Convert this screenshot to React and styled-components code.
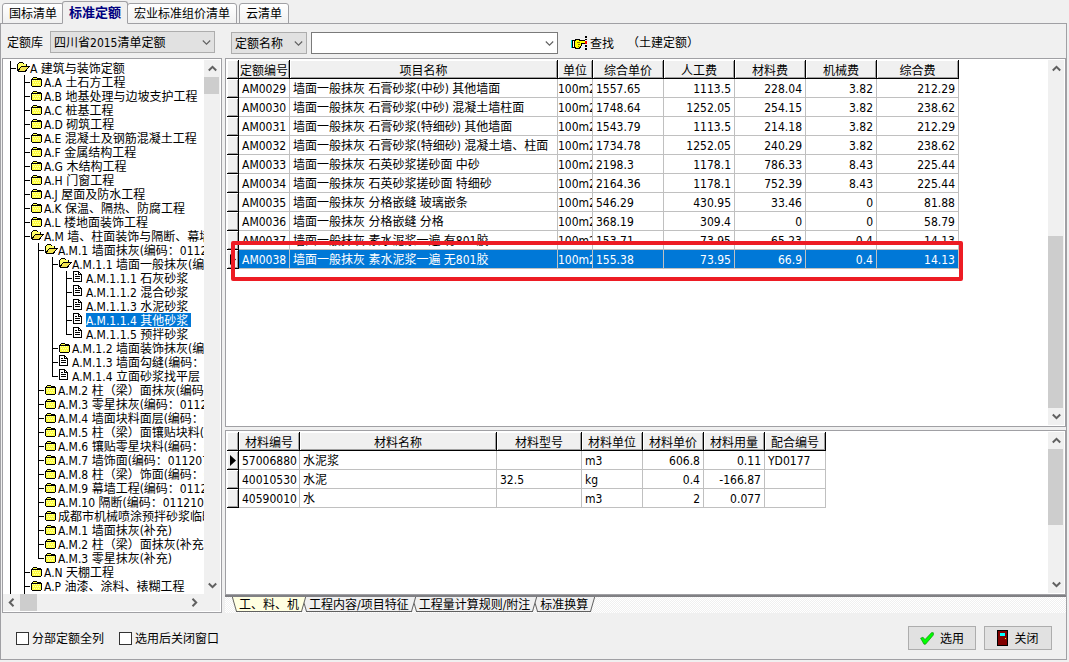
import React, { useState } from "react";
import styled, { createGlobalStyle, css } from "styled-components";

const FONT = '"DejaVu Sans Condensed", "Noto Sans CJK SC", "Noto Sans", sans-serif';

const GlobalStyle = createGlobalStyle`
  *, *::before, *::after { box-sizing: border-box; }
  body {
    margin: 0;
    background: #f0f0f0;
    color: #000;
    font: 12px/14px ${FONT};
  }
  button, input, select { font: inherit; color: inherit; margin: 0; border-radius: 0; }
`;

const Window = styled.div`
  display: flex;
  flex-direction: column;
  height: 100vh;
  min-height: 480px;
  padding: 0 2px 2px 0;
`;

const TabBar = styled.nav`
  display: flex;
  align-items: flex-end;
  height: 24px;
  padding-left: 2px;
  margin-bottom: -1px;
  flex: none;
`;

const Tab = styled.button`
  position: relative;
  height: 21px;
  padding: 1px 6px 0;
  margin-right: 2px;
  border: 1px solid #a0a0a4;
  border-radius: 3px 3px 0 0;
  background: linear-gradient(#fff, #f0f0f0);
  white-space: nowrap;
  ${(p) =>
    p.$active &&
    css`
      z-index: 1;
      height: 23px;
      margin: 0 -1px 0 -4px;
      border-bottom-color: #f0f0f0;
      background: #f0f0f0;
      color: #000080;
      font-size: 13px;
      font-weight: bold;
    `}
`;

const Frame = styled.main`
  flex: 1;
  min-height: 0;
  display: flex;
  flex-direction: column;
  border: 1px solid #a0a0a4;
`;

const Columns = styled.div`
  flex: 1;
  min-height: 0;
  display: flex;
  gap: 3px;
  padding-left: 1px;
`;

const Column = styled.section`
  display: flex;
  flex-direction: column;
  min-width: 0;
  flex: ${(p) => (p.$side ? "0 0 220px" : "1")};
`;

const Toolbar = styled.div`
  flex: none;
  display: flex;
  align-items: center;
  height: 34px;
  padding: ${(p) => (p.$side ? "2px 7px 0 5px" : "4px 6px 0")};
  gap: ${(p) => (p.$side ? "7px" : "4px")};
`;

const FieldLabel = styled.label`
  padding-top: 2px;
`;

const SelectWrap = styled.span`
  position: relative;
  display: flex;
  flex: ${(p) => (p.$fill ? "1" : `0 0 ${p.$width}px`)};
  height: 22px;
`;

const Select = styled.select`
  appearance: none;
  width: 100%;
  padding: 2px 18px 0 3px;
  border: 1px solid #adadad;
  background: #e1e1e1;
`;

const ComboInput = styled.input`
  width: 100%;
  padding: 0 20px 0 3px;
  border: 1px solid #7a7a7a;
  background: #fff;
`;

const ChevronSlot = styled.span`
  position: absolute;
  right: 4px;
  top: 0;
  height: 100%;
  display: flex;
  align-items: center;
  pointer-events: none;
`;

const FlatButton = styled.button`
  display: flex;
  align-items: center;
  gap: 2px;
  padding: 0;
  margin-left: 9px;
  border: 0;
  background: none;
`;

const Category = styled.span`
  margin-left: 9px;
`;

const Panel = styled.div`
  display: flex;
  min-height: 0;
  border: 1px solid #a0a0a4;
  background: #fff;
  flex: ${(p) => (p.$height ? `0 0 ${p.$height}px` : "1")};
  flex-direction: ${(p) => (p.$column ? "column" : "row")};
  padding: ${(p) => (p.$column ? "1px 1px 1px 0" : "1px")};
  margin-bottom: ${(p) => (p.$gap ? "3px" : "0")};
`;

const TreeBody = styled.div`
  flex: 1;
  min-height: 0;
  display: flex;
`;

const TreeList = styled.ul`
  flex: 1;
  min-width: 0;
  min-height: 0;
  margin: 0;
  padding: 1px 0 0;
  overflow: hidden;
  list-style: none;
`;

const TreeRow = styled.li`
  display: flex;
  height: 14px;
  white-space: nowrap;
`;

const Guide = styled.span`
  flex: none;
  width: 14px;
  height: 14px;
  background:
    linear-gradient(#000, #000) 7px 0 / 1px ${(p) => (p.$last ? "8px" : "14px")} no-repeat,
    linear-gradient(#000, #000) 7px 7px / ${(p) => (p.$branch ? "6px" : "0")} 1px no-repeat;
`;

const TreeIcon = styled.svg`
  flex: none;
  width: 13px;
  height: 14px;
  shape-rendering: crispEdges;
`;

const TreeLabel = styled.span`
  flex: none;
  line-height: 16px;
  ${(p) =>
    p.$selected &&
    css`
      padding-right: 3px;
      background: #0078d7;
      color: #fff;
    `}
`;

const ScrollTrack = styled.div`
  flex: none;
  display: flex;
  background: #f0f0f0;
  flex-direction: ${(p) => (p.$horizontal ? "row" : "column")};
  ${(p) => (p.$horizontal ? "height: 17px; padding-right: 17px;" : "width: 16px;")}
`;

const ScrollEnd = styled.span`
  flex: 0 0 17px;
  display: flex;
  align-items: center;
  justify-content: center;
`;

const ScrollRun = styled.span`
  flex: 1;
  min-height: 0;
  display: flex;
  flex-direction: ${(p) => (p.$horizontal ? "row" : "column")};
  justify-content: ${(p) => (p.$end ? "flex-end" : "flex-start")};
`;

const ScrollThumb = styled.span`
  flex: 0 0 ${(p) => p.$size};
  background: #cdcdcd;
  ${(p) => !p.$horizontal && "width: 15px;"}
`;

const GridArea = styled.div`
  flex: 1;
  min-width: 0;
  overflow: hidden;
`;

const TableBox = styled.div`
  position: relative;
  width: max-content;
`;

const Table = styled.table`
  table-layout: fixed;
  width: ${(p) => p.$width}px;
  border-spacing: 0;
  border-collapse: separate;
`;

const raised = css`
  border-right: 1px solid #000;
  border-bottom: 1px solid #000;
  background: #f0f0f0;
  box-shadow: inset 1px 1px #fff, inset -1px -1px #a0a0a0;
`;

const HeadCell = styled.th`
  ${raised}
  height: 19px;
  padding: 3px 0 0;
  font-weight: normal;
  white-space: nowrap;
  overflow: hidden;
`;

const MarkerCell = styled.td`
  ${raised}
  height: 19px;
  padding: 0 0 0 3px;
`;

const Cell = styled.td`
  height: 19px;
  padding: 2px ${(p) => (p.$tight ? "0" : "3px")} 0;
  border-right: 1px solid #c0c0c0;
  border-bottom: 1px solid #c0c0c0;
  overflow: hidden;
  white-space: nowrap;
  text-align: ${(p) => (p.$right ? "right" : "left")};
  ${(p) => p.$selected && "background: #0078d7; color: #fff;"}
`;

const Highlight = styled.div`
  position: absolute;
  left: 4px;
  right: -4px;
  bottom: -12px;
  height: 40px;
  border: 4px solid #ed1c24;
  border-radius: 2px;
  pointer-events: none;
`;

const SheetTabs = styled.div`
  flex: 0 0 18px;
  display: flex;
  padding-left: 9px;
  border-top: 2px solid #808084;
  background: repeating-conic-gradient(#f0f0f0 0 25%, #fff 0 50%) 0 0 / 2px 2px;
`;

const SheetTab = styled.button`
  position: relative;
  isolation: isolate;
  z-index: ${(p) => p.$order};
  height: 15px;
  padding: 0 5px;
  border: 0;
  background: none;
  line-height: 14px;
  white-space: nowrap;
  &::before, &::after {
    content: "";
    position: absolute;
    z-index: -1;
    top: 0;
    bottom: 0;
    width: calc(50% + 3px);
    border-bottom: 1px solid #606060;
    background: ${(p) => (p.$active ? "#ffffe1" : "#f0f0f0")};
  }
  &::before {
    left: 0;
    border-left: 1px solid #606060;
    transform: skewX(16deg);
  }
  &::after {
    right: 0;
    border-right: 1px solid #606060;
    transform: skewX(-16deg);
  }
`;

const Footer = styled.footer`
  flex: 0 0 46px;
  display: flex;
  align-items: center;
  gap: 15px;
  padding: 4px 14px 0 15px;
`;

const CheckLabel = styled.label`
  display: flex;
  align-items: center;
  gap: 3px;
`;

const Caption = styled.span`
  padding-top: 2px;
`;

const CheckBox = styled.input`
  appearance: none;
  width: 13px;
  height: 13px;
  border: 1px solid #333;
  background: #fff;
  &:checked { background: #0078d7; box-shadow: inset 0 0 0 2px #fff; }
`;

const Actions = styled.div`
  display: flex;
  gap: 8px;
  margin-left: auto;
`;

const ActionButton = styled.button`
  display: flex;
  align-items: center;
  justify-content: center;
  gap: 6px;
  width: 68px;
  height: 24px;
  padding: 0;
  border: 1px solid #adadad;
  background: #e1e1e1;
`;

const TURN = { down: 0, up: 180, left: 90, right: 270 };

function Chevron({ dir = "down", bold }) {
  return (
    <svg width="9" height="9" viewBox="0 0 9 9" aria-hidden="true">
      <path
        d="M0.8 2.5 L4.5 6.2 L8.2 2.5"
        fill="none"
        stroke="#606060"
        strokeWidth={bold ? 2 : 1.1}
        transform={`rotate(${TURN[dir]} 4.5 4.5)`}
      />
    </svg>
  );
}

function NodeIcon({ kind }) {
  if (kind === "doc")
    return (
      <TreeIcon viewBox="0 0 13 14" aria-hidden="true">
        <path d="M0 0h6v1h1v1h1v1h1v8H0z" fill="#000" />
        <path d="M1 1h4v3h3v6H1z" fill="#fff" />
        <path d="M6 2h1v1H6z" fill="#fff" />
        <path d="M2 3h2v1H2zM2 5h5v1H2zM2 7h5v1H2z" fill="#000" />
      </TreeIcon>
    );
  if (kind === "open")
    return (
      <TreeIcon viewBox="0 0 13 14" aria-hidden="true">
        <path d="M2 1h4v1h1v1h3v2h3v1h-1v1h-1v1h-1v2h-1v1H1v-1H0V3h1V2h1z" fill="#000" />
        <path d="M2 2h4v1h3v2H4v1H3v1H2v1H1V3h1z" fill="#ffff66" />
        <path d="M4 6h7v1h-1v1H9v1H8v1H2V9h1V7h1z" fill="#f2e24c" />
      </TreeIcon>
    );
  return (
    <TreeIcon viewBox="0 0 13 14" aria-hidden="true">
      <path d="M1 3h1V2h4v1h4v1h1v7h-1v1H1v-1H0V4h1z" fill="#000" />
      <path d="M2 3h4v1H2zM1 5h9v6H1z" fill="#ffff40" />
      <path d="M1 5h1v1H1zM3 5h1v1H3zM5 5h1v1H5zM7 5h1v1H7zM2 7h1v1H2zM4 7h1v1H4zM6 7h1v1H6zM8 7h1v1H8zM3 9h1v1H3zM5 9h1v1H5zM7 9h1v1H7z" fill="#ffffb0" />
    </TreeIcon>
  );
}

function HandIcon() {
  return (
    <svg width="17" height="15" viewBox="0 0 17 15" shapeRendering="crispEdges" aria-hidden="true">
      <path d="M0 4h4V3h5v1h5v1h1v2h-1v1h-3v2h-1v2H9v1H4v-1H0z" fill="#000" />
      <path d="M0 4h1v8H0z" fill="#00e0e0" />
      <path d="M2 5h1v6H2z" fill="#fff" />
      <path d="M4 5h1V4h3v1h6v2h-4v1h0v2H9v1H8v1H5v-1H4z" fill="#ffff00" />
      <path d="M6 6h3v1H6zM7 8h2v1H7zM7 10h1v1H7z" fill="#808000" />
      <path d="M14 0h2v2h-2zM14 3h2v1h-2zM14 9h2v2h-2zM14 12h2v2h-2z" fill="#000" />
      <path d="M14 5h2v3h-2z" fill="#ff0000" />
    </svg>
  );
}

function CheckIcon() {
  return (
    <svg width="14" height="13" viewBox="0 0 14 13" aria-hidden="true">
      <path d="M0.6 6.2 L3 5.2 L5 7.6 L11.6 0.6 L13.4 0.8 L13.4 3 L5.6 12.2 L4 12.2 Z" fill="#00ff00" stroke="#159015" strokeWidth="0.7" />
    </svg>
  );
}

function DoorIcon() {
  return (
    <svg width="11" height="16" viewBox="0 0 11 16" shapeRendering="crispEdges" aria-hidden="true">
      <path d="M0 0h11v16H0z" fill="#000" />
      <path d="M1 1h9v14H1z" fill="#800000" />
      <path d="M3 3h5v3H3z" fill="#00ffff" />
      <path d="M8 8h1v1H8z" fill="#ffff00" />
    </svg>
  );
}

function RowPointer() {
  return (
    <svg width="7" height="11" viewBox="0 0 7 11" display="block" aria-label="当前行">
      <path d="M0 0v11l6-5.5z" fill="#000" />
    </svg>
  );
}

function ScrollBar({ horizontal, size, end }) {
  return (
    <ScrollTrack $horizontal={horizontal} aria-hidden="true">
      <ScrollEnd>
        <Chevron bold dir={horizontal ? "left" : "up"} />
      </ScrollEnd>
      <ScrollRun $horizontal={horizontal} $end={end}>
        <ScrollThumb $horizontal={horizontal} $size={size} />
      </ScrollRun>
      <ScrollEnd>
        <Chevron bold dir={horizontal ? "right" : "down"} />
      </ScrollEnd>
    </ScrollTrack>
  );
}

const TREE = [
  [0, "open", "A 建筑与装饰定额"],
  [1, "folder", "A.A 土石方工程"],
  [1, "folder", "A.B 地基处理与边坡支护工程"],
  [1, "folder", "A.C 桩基工程"],
  [1, "folder", "A.D 砌筑工程"],
  [1, "folder", "A.E 混凝土及钢筋混凝土工程"],
  [1, "folder", "A.F 金属结构工程"],
  [1, "folder", "A.G 木结构工程"],
  [1, "folder", "A.H 门窗工程"],
  [1, "folder", "A.J 屋面及防水工程"],
  [1, "folder", "A.K 保温、隔热、防腐工程"],
  [1, "folder", "A.L 楼地面装饰工程"],
  [1, "open", "A.M 墙、柱面装饰与隔断、幕墙工程"],
  [2, "open", "A.M.1 墙面抹灰(编码：011201)"],
  [3, "open", "A.M.1.1 墙面一般抹灰(编码：011201001)"],
  [4, "doc", "A.M.1.1.1 石灰砂浆"],
  [4, "doc", "A.M.1.1.2 混合砂浆"],
  [4, "doc", "A.M.1.1.3 水泥砂浆"],
  [4, "doc", "A.M.1.1.4 其他砂浆"],
  [4, "doc", "A.M.1.1.5 预拌砂浆", true],
  [3, "folder", "A.M.1.2 墙面装饰抹灰(编码：011201002)"],
  [3, "doc", "A.M.1.3 墙面勾缝(编码：011201003)"],
  [3, "doc", "A.M.1.4 立面砂浆找平层", true],
  [2, "folder", "A.M.2 柱（梁）面抹灰(编码：011202)"],
  [2, "folder", "A.M.3 零星抹灰(编码：011203)"],
  [2, "folder", "A.M.4 墙面块料面层(编码：011204)"],
  [2, "folder", "A.M.5 柱（梁）面镶贴块料(编码：011205)"],
  [2, "folder", "A.M.6 镶贴零星块料(编码：011206)"],
  [2, "folder", "A.M.7 墙饰面(编码：011207)"],
  [2, "folder", "A.M.8 柱（梁）饰面(编码：011208)"],
  [2, "folder", "A.M.9 幕墙工程(编码：011209)"],
  [2, "folder", "A.M.10 隔断(编码：011210)"],
  [2, "folder", "成都市机械喷涂预拌砂浆临时定额"],
  [2, "folder", "A.M.1 墙面抹灰(补充)"],
  [2, "folder", "A.M.2 柱（梁）面抹灰(补充)"],
  [2, "folder", "A.M.3 零星抹灰(补充)", true],
  [1, "folder", "A.N 天棚工程"],
  [1, "folder", "A.P 油漆、涂料、裱糊工程"],
  [1, "folder", "A.Q 其他装饰工程"],
];

const QUOTA_COLUMNS = [
  { name: "定额编号", width: 51 },
  { name: "项目名称", width: 268 },
  { name: "单位", width: 35, tight: true },
  { name: "综合单价", width: 71 },
  { name: "人工费", width: 71, right: true },
  { name: "材料费", width: 71, right: true },
  { name: "机械费", width: 71, right: true },
  { name: "综合费", width: 82, right: true },
];

const QUOTA_ROWS = [
  ["AM0029", "墙面一般抹灰 石膏砂浆(中砂) 其他墙面", "100m2", "1557.65", "1113.5", "228.04", "3.82", "212.29"],
  ["AM0030", "墙面一般抹灰 石膏砂浆(中砂) 混凝土墙柱面", "100m2", "1748.64", "1252.05", "254.15", "3.82", "238.62"],
  ["AM0031", "墙面一般抹灰 石膏砂浆(特细砂) 其他墙面", "100m2", "1543.79", "1113.5", "214.18", "3.82", "212.29"],
  ["AM0032", "墙面一般抹灰 石膏砂浆(特细砂) 混凝土墙、柱面", "100m2", "1734.78", "1252.05", "240.29", "3.82", "238.62"],
  ["AM0033", "墙面一般抹灰 石英砂浆搓砂面 中砂", "100m2", "2198.3", "1178.1", "786.33", "8.43", "225.44"],
  ["AM0034", "墙面一般抹灰 石英砂浆搓砂面 特细砂", "100m2", "2164.36", "1178.1", "752.39", "8.43", "225.44"],
  ["AM0035", "墙面一般抹灰 分格嵌缝 玻璃嵌条", "100m2", "546.29", "430.95", "33.46", "0", "81.88"],
  ["AM0036", "墙面一般抹灰 分格嵌缝 分格", "100m2", "368.19", "309.4", "0", "0", "58.79"],
  ["AM0037", "墙面一般抹灰 素水泥浆一遍 有801胶", "100m2", "153.71", "73.95", "65.23", "0.4", "14.13"],
  ["AM0038", "墙面一般抹灰 素水泥浆一遍 无801胶", "100m2", "155.38", "73.95", "66.9", "0.4", "14.13"],
];

const MATERIAL_COLUMNS = [
  { name: "材料编号", width: 61 },
  { name: "材料名称", width: 197 },
  { name: "材料型号", width: 85 },
  { name: "材料单位", width: 61 },
  { name: "材料单价", width: 61, right: true },
  { name: "材料用量", width: 61, right: true },
  { name: "配合编号", width: 61 },
];

const MATERIAL_ROWS = [
  ["57006880", "水泥浆", "", "m3", "606.8", "0.11", "YD0177"],
  ["40010530", "水泥", "32.5", "kg", "0.4", "-166.87", ""],
  ["40590010", "水", "", "m3", "2", "0.077", ""],
];

function DataGrid({ columns, rows, current, selected }) {
  const width = columns.reduce((sum, c) => sum + c.width, 12);
  return (
    <Table $width={width}>
      <colgroup>
        <col width="12" />
        {columns.map((c) => (
          <col key={c.name} width={c.width} />
        ))}
      </colgroup>
      <thead>
        <tr>
          <HeadCell as="td" />
          {columns.map((c) => (
            <HeadCell key={c.name} scope="col">{c.name}</HeadCell>
          ))}
        </tr>
      </thead>
      <tbody>
        {rows.map((row, r) => (
          <tr key={row[0]}>
            <MarkerCell>{r === current && <RowPointer />}</MarkerCell>
            {row.map((value, i) => (
              <Cell key={i} $right={columns[i].right} $tight={columns[i].tight} $selected={r === selected}>
                {value}
              </Cell>
            ))}
          </tr>
        ))}
      </tbody>
    </Table>
  );
}

const MAIN_TABS = ["国标清单", "标准定额", "宏业标准组价清单", "云清单"];
const SHEETS = ["工、料、机", "工程内容/项目特征", "工程量计算规则/附注", "标准换算"];

export default function App() {
  const [tab, setTab] = useState(1);
  const [sheet, setSheet] = useState(0);
  const [node, setNode] = useState(18);

  return (
    <Window>
      <GlobalStyle />
      <TabBar>
        {MAIN_TABS.map((name, i) => (
          <Tab key={name} $active={i === tab} onClick={() => setTab(i)}>{name}</Tab>
        ))}
      </TabBar>
      <Frame>
        <Columns>
          <Column $side>
            <Toolbar $side>
              <FieldLabel htmlFor="library">定额库</FieldLabel>
              <SelectWrap $fill>
                <Select id="library">
                  <option>四川省2015清单定额</option>
                </Select>
                <ChevronSlot><Chevron /></ChevronSlot>
              </SelectWrap>
            </Toolbar>
            <Panel $column>
              <TreeBody>
                <TreeList>
                  {TREE.map(([depth, kind, label, last], i) => (
                    <TreeRow key={i} onClick={() => setNode(i)}>
                      {Array.from({ length: depth }, (_, d) => (
                        <Guide key={d} />
                      ))}
                      <Guide $branch $last={last} />
                      <NodeIcon kind={kind} />
                      <TreeLabel $selected={i === node}>{label}</TreeLabel>
                    </TreeRow>
                  ))}
                </TreeList>
                <ScrollBar size="17px" />
              </TreeBody>
              <ScrollBar horizontal size="17px" />
            </Panel>
          </Column>
          <Column>
            <Toolbar>
              <SelectWrap $width={76}>
                <Select aria-label="查找字段">
                  <option>定额名称</option>
                </Select>
                <ChevronSlot><Chevron /></ChevronSlot>
              </SelectWrap>
              <SelectWrap $width={247}>
                <ComboInput aria-label="查找内容" />
                <ChevronSlot><Chevron /></ChevronSlot>
              </SelectWrap>
              <FlatButton><HandIcon /><Caption>查找</Caption></FlatButton>
              <Category><Caption>（土建定额）</Caption></Category>
            </Toolbar>
            <Panel $gap>
              <GridArea>
                <TableBox>
                  <DataGrid columns={QUOTA_COLUMNS} rows={QUOTA_ROWS} current={9} selected={9} />
                  <Highlight />
                </TableBox>
              </GridArea>
              <ScrollBar size="52%" end />
            </Panel>
            <Panel $height={165}>
              <GridArea>
                <DataGrid columns={MATERIAL_COLUMNS} rows={MATERIAL_ROWS} current={0} />
              </GridArea>
              <ScrollBar size="60%" />
            </Panel>
            <SheetTabs>
              {SHEETS.map((name, i) => (
                <SheetTab key={name} $active={i === sheet} $order={i === sheet ? 9 : 8 - i} onClick={() => setSheet(i)}>
                  {name}
                </SheetTab>
              ))}
            </SheetTabs>
          </Column>
        </Columns>
        <Footer>
          <CheckLabel><CheckBox type="checkbox" /><Caption>分部定额全列</Caption></CheckLabel>
          <CheckLabel><CheckBox type="checkbox" /><Caption>选用后关闭窗口</Caption></CheckLabel>
          <Actions>
            <ActionButton><CheckIcon /><Caption>选用</Caption></ActionButton>
            <ActionButton><DoorIcon /><Caption>关闭</Caption></ActionButton>
          </Actions>
        </Footer>
      </Frame>
    </Window>
  );
}
